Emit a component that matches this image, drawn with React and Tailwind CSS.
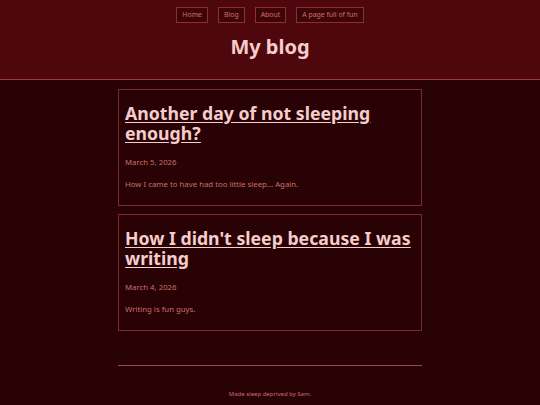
const posts = [
  { title: 'Another day of not sleeping enough?', date: 'March 5, 2026', excerpt: 'How I came to have had too little sleep... Again.' },
  { title: "How I didn't sleep because I was writing", date: 'March 4, 2026', excerpt: 'Writing is fun guys.' },
];

const links = ['Home', 'Blog', 'About', 'A page full of fun'];

export default function App() {
  return (
    <div className="min-h-screen bg-[#280204] [font-family:'Noto_Sans',sans-serif]">
      <header className="bg-[#4e080d] border-b border-[#9a3a40] pt-[7px] pb-[17px]">
        <nav className="flex justify-center gap-[10px]">
          {links.map((l) => (
            <a key={l} href="#" className="block h-[16px] px-[5px] leading-[14px] text-[6.9px] text-[#cc6e6e] bg-[#3e0509] border border-[#8a3035]">
              {l}
            </a>
          ))}
        </nav>
        <h1 className="mt-[9px] text-center text-[20px] leading-[30px] font-bold text-[#f5cdcb]">My blog</h1>
      </header>

      <main className="w-[304px] mx-auto pt-[9px] flex flex-col gap-[8px]">
        {posts.map((p) => (
          <article key={p.title} className="border border-[#7a2a30] px-[6px] pt-[14px] h-[117px]">
            <h2 className="text-[17.7px] leading-[19.5px] font-bold text-[#f5cdcb] underline underline-offset-[2px]">
              <a href="#">{p.title}</a>
            </h2>
            <p className="mt-[13px] text-[7.8px] leading-[12px] text-[#cc6e6e]">{p.date}</p>
            <p className="mt-[10px] text-[7.8px] leading-[12px] text-[#cc6e6e]">{p.excerpt}</p>
          </article>
        ))}
      </main>

      <footer className="w-[304px] mx-auto mt-[34px] border-t border-[#9a4a50] pt-[24px] text-center text-[6px] leading-[9px] text-[#cc6e6e]">
        Made sleep deprived by Sam.
      </footer>
    </div>
  );
}
